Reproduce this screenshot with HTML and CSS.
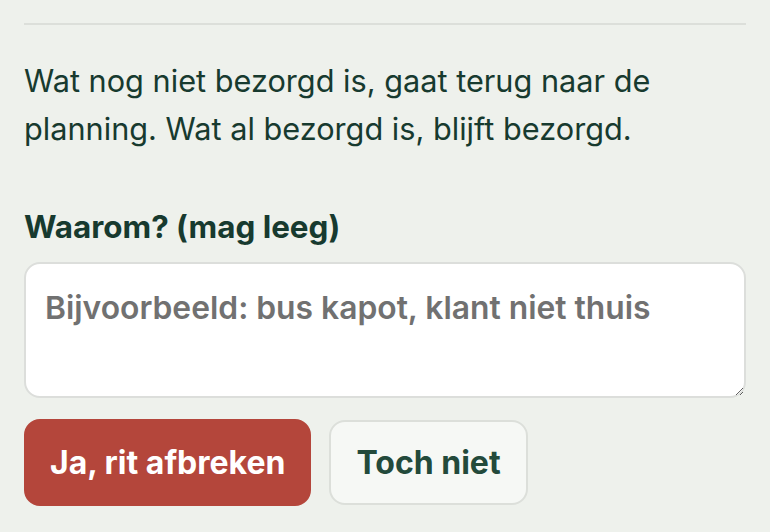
FILE: index.html
```html
<!DOCTYPE html>
<html lang="nl">
<head>
<meta charset="utf-8">
<title>Rit afbreken</title>
<link rel="stylesheet" href="styles.css">
</head>
<body>
<div class="panel">
  <hr class="divider">
  <p class="info">Wat nog niet bezorgd is, gaat terug naar de planning. Wat al bezorgd is, blijft bezorgd.</p>
  <label class="label" for="reason">Waarom? (mag leeg)</label>
  <textarea id="reason" class="reason" placeholder="Bijvoorbeeld: bus kapot, klant niet thuis"></textarea>
  <div class="actions">
    <button class="btn btn-danger" type="button">Ja, rit afbreken</button>
    <button class="btn btn-ghost" type="button">Toch niet</button>
  </div>
</div>
</body>
</html>
```
FILE: styles.css
```css
* { box-sizing: border-box; }
html, body {
  margin: 0;
  background: #eef1ec;
}
body {
  font-family: Inter, "Noto Sans", "Liberation Sans", sans-serif;
  color: #173a2f;
}
.panel {
  padding: 23px 24px 24px;
  display: flex;
  flex-direction: column;
}
.divider {
  margin: 0;
  border: 0;
  height: 2px;
  background: #dcdfda;
}
.info {
  margin: 32px 0 0;
  font-size: 30.7px;
  line-height: 48px;
}
.label {
  display: block;
  margin-top: 50px;
  font-size: 31.4px;
  line-height: 48px;
  font-weight: 700;
}
.reason {
  display: block;
  width: 100%;
  height: 136px;
  margin-top: 11px;
  padding: 25px 19px 16px;
  border: 2px solid #dcdedb;
  border-radius: 16px;
  background: #ffffff;
  font-family: inherit;
  font-size: 31.8px;
  line-height: 1.2;
  color: #173a2f;
  resize: vertical;
  outline: none;
}
.reason::placeholder {
  color: #717171;
  font-weight: 600;
}
.actions {
  display: flex;
  gap: 18px;
  margin-top: 21px;
  align-items: center;
}
.btn {
  font-family: inherit;
  font-size: 32px;
  font-weight: 700;
  height: 87px;
  padding: 0 24px;
  border-radius: 16px;
  border: 2px solid transparent;
}
.btn-danger {
  background: #b4463b;
  border-color: #b4463b;
  color: #ffffff;
}
.btn-ghost {
  height: 85px;
  padding: 0 25px;
  background: #f6f8f5;
  border-color: #dcdfda;
  color: #234a3b;
}
```
